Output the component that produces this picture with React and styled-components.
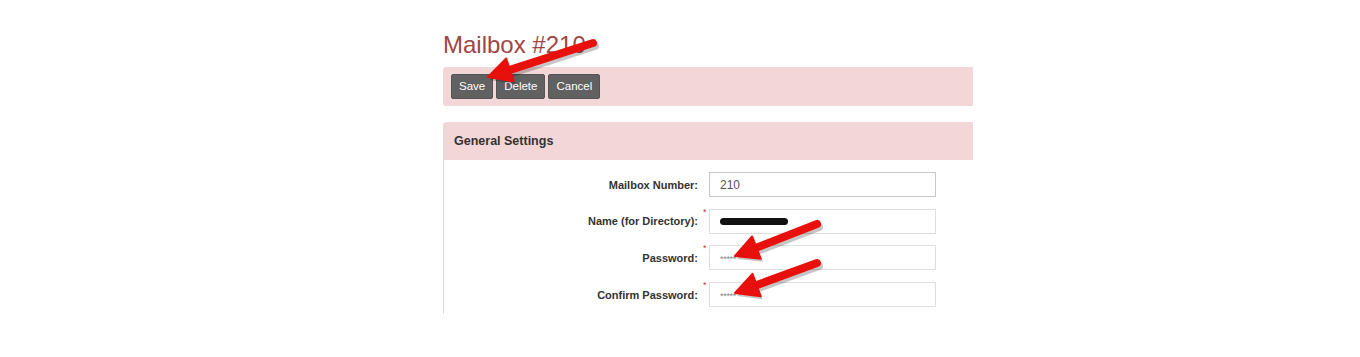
import styled, { createGlobalStyle } from 'styled-components';

const GlobalStyle = createGlobalStyle`
  html, body {
    margin: 0;
    padding: 0;
    background: #fff;
    font-family: 'Liberation Sans', Arial, sans-serif;
  }
`;

const Page = styled.div`
  position: relative;
  width: 1360px;
  height: 357px;
  overflow: hidden;
  background: #fff;
  padding: 30px 0 0 443px;
  box-sizing: border-box;
`;

const Column = styled.div`
  width: 530px;
`;

const Title = styled.h1`
  margin: 0 0 8px 0;
  font-size: 24px;
  line-height: 29px;
  font-weight: normal;
  color: #9e4646;
`;

const Toolbar = styled.div`
  display: flex;
  gap: 3px;
  background: #f2d6d8;
  border-radius: 3px 0 0 3px;
  padding: 7px 8px;
  height: 39px;
  box-sizing: border-box;
`;

const Button = styled.button`
  height: 25px;
  padding: 0 7px;
  background: #616161;
  color: #fff;
  border: 1px solid #555;
  border-radius: 2px;
  font-family: 'Liberation Sans', Arial, sans-serif;
  font-size: 11.5px;
  line-height: 23px;
  cursor: pointer;
`;

const Panel = styled.div`
  margin-top: 16px;
  border-left: 1px solid #dcdcdc;
  border-top-left-radius: 3px;
  height: 192px;
`;

const PanelHeader = styled.div`
  background: #f2d6d8;
  height: 38px;
  display: flex;
  align-items: center;
  padding-left: 10px;
  font-size: 12.5px;
  font-weight: bold;
  color: #333;
  border-top-left-radius: 3px;
`;

const Form = styled.div`
  display: flex;
  flex-direction: column;
  gap: 11.7px;
  padding-top: 12px;
`;

const Row = styled.div`
  display: grid;
  grid-template-columns: 254px 11px 227px;
  align-items: center;
  height: 25px;
`;

const Label = styled.label`
  text-align: right;
  font-size: 11px;
  font-weight: bold;
  color: #333;
`;

const Req = styled.span`
  align-self: start;
  margin-top: -2px;
  padding-left: 5px;
  font-size: 9px;
  color: #c33;
`;

const Field = styled.div`
  height: 25px;
  border: 1px solid ${(p) => (p.$dark ? '#c8c8c8' : '#dedede')};
  box-sizing: border-box;
  display: flex;
  align-items: center;
  padding-left: 10px;
  font-size: 12px;
  color: #555;
`;

const Redact = styled.span`
  display: inline-block;
  width: 68px;
  height: 7px;
  background: #111;
  border-radius: 4px;
`;

const Masked = styled.span`
  font-size: 9px;
  letter-spacing: -0.3px;
  color: #888;
  margin-top: 3px;
`;

const Overlay = styled.svg`
  position: absolute;
  left: 0;
  top: 0;
  pointer-events: none;
`;

const arrows = [
  { x1: 593, y1: 43, x2: 488, y2: 77 },
  { x1: 817, y1: 224, x2: 735, y2: 256 },
  { x1: 817, y1: 263, x2: 735, y2: 293 },
];

const Arrow = ({ x1, y1, x2, y2 }) => {
  const dx = x2 - x1;
  const dy = y2 - y1;
  const len = Math.hypot(dx, dy);
  const ux = dx / len;
  const uy = dy / len;
  const px = -uy;
  const py = ux;
  const headLen = 23;
  const headW = 12;
  const bx = x2 - ux * headLen;
  const by = y2 - uy * headLen;
  const head = `${x2},${y2} ${bx + px * headW},${by + py * headW} ${bx - px * headW},${by - py * headW}`;
  return (
    <g>
      <g transform="translate(2,3)" opacity="0.22">
        <line x1={x1} y1={y1} x2={bx} y2={by} stroke="#000" strokeWidth="8" strokeLinecap="round" />
        <polygon points={head} fill="#000" />
      </g>
      <line x1={x1} y1={y1} x2={bx + ux * 3} y2={by + uy * 3} stroke="#e8100c" strokeWidth="8" strokeLinecap="round" />
      <polygon points={head} fill="#e8100c" strokeLinejoin="round" stroke="#e8100c" strokeWidth="2" />
    </g>
  );
};

const fields = [
  { label: 'Mailbox Number:', value: '210', dark: true },
  { label: 'Name (for Directory):', req: true, redact: true },
  { label: 'Password:', req: true, masked: true },
  { label: 'Confirm Password:', req: true, masked: true },
];

export default function App() {
  return (
    <>
      <GlobalStyle />
      <Page>
        <Column>
          <Title>Mailbox #210</Title>
          <Toolbar>
            <Button>Save</Button>
            <Button>Delete</Button>
            <Button>Cancel</Button>
          </Toolbar>
          <Panel>
            <PanelHeader>General Settings</PanelHeader>
            <Form>
              {fields.map((f) => (
                <Row key={f.label}>
                  <Label>{f.label}</Label>
                  <Req>{f.req ? '*' : ''}</Req>
                  <Field $dark={f.dark}>
                    {f.value}
                    {f.redact && <Redact />}
                    {f.masked && <Masked>*****</Masked>}
                  </Field>
                </Row>
              ))}
            </Form>
          </Panel>
        </Column>
        <Overlay width="1360" height="357">
          {arrows.map((a, i) => (
            <Arrow key={i} {...a} />
          ))}
        </Overlay>
      </Page>
    </>
  );
}
